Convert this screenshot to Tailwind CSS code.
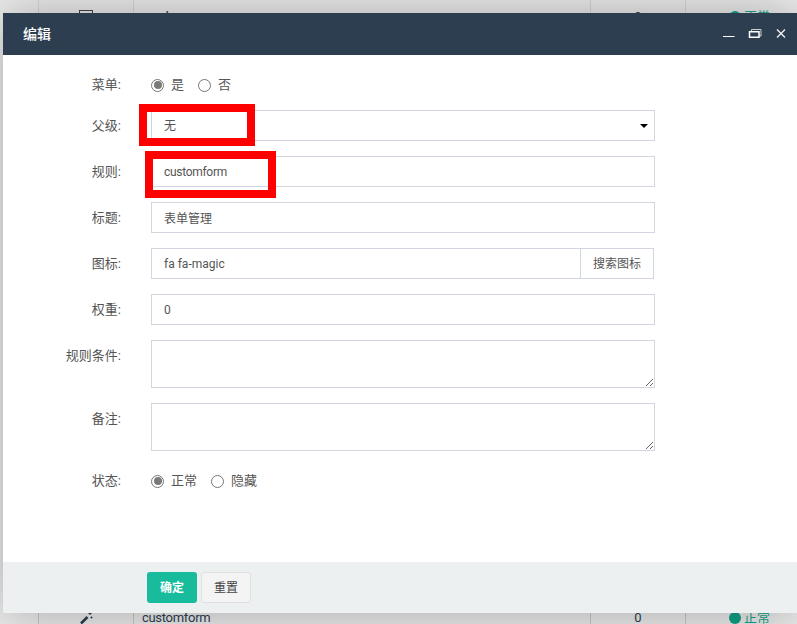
<!DOCTYPE html>
<html lang="zh">
<head>
<meta charset="utf-8">
<script src="https://cdn.jsdelivr.net/npm/@tailwindcss/browser@4"></script>
<title>编辑</title>
</head>
<body class="relative w-[797px] h-[624px] overflow-hidden bg-[#ececec] font-['Roboto','Noto_Sans_CJK_SC',sans-serif] text-[13px] text-[#555]">

<div class="flex h-full flex-col justify-between">
  <div class="grid h-[34px] grid-cols-[38px_95px_457px_95px_112px]">
    <div></div>
    <div class="flex items-center justify-center border-l border-[#d8d8d8]"><span class="h-[14px] w-[14px] border border-[#444]"></span></div>
    <div class="flex items-center border-l border-[#d8d8d8] pl-[28px] text-[14px] text-[#2c3e50]">ılı</div>
    <div class="flex items-center justify-center border-l border-[#d8d8d8] text-[13px] text-[#2c3e50]">0</div>
    <div class="flex items-center gap-[3px] border-l border-[#d8d8d8] pl-[43px] text-[13px] text-[#18a689]"><span class="h-[12px] w-[12px] rounded-full bg-[#12a386]"></span>正常</div>
  </div>
  <div class="-mb-[9px] grid h-[30px] grid-cols-[38px_95px_457px_95px_112px]">
    <div></div>
    <div class="flex items-center justify-center border-l border-[#c8c8c8]">
      <svg width="14" height="14" viewBox="0 0 14 14" fill="none"><path d="M2 12.500 L8.500 6" stroke="#2c3e50" stroke-width="2.600"/><path d="M11 1v3M9.500 2.500h3M12.500 5.500v2M11.500 6.500h2" stroke="#2c3e50" stroke-width="1"/></svg>
    </div>
    <div class="flex items-center border-l border-[#c8c8c8] pl-[8px] text-[13px] tracking-[-0.3px] text-[#2c3e50]">customform</div>
    <div class="flex items-center justify-center border-l border-[#c8c8c8] text-[13px] text-[#2c3e50]">0</div>
    <div class="flex items-center gap-[3px] border-l border-[#c8c8c8] pl-[43px] text-[13px] text-[#18a689]"><span class="h-[12px] w-[12px] rounded-full bg-[#12a386]"></span>正常</div>
  </div>
</div>

<div class="absolute left-[3px] top-[13px] flex h-[600px] w-[794px] flex-col bg-white shadow-[1px_1px_50px_rgba(0,0,0,0.3)]">
  <div class="flex h-[42px] shrink-0 items-center justify-between bg-[#2c3e50] pl-[20px] pr-[11px] text-white">
    <span class="text-[14px] font-medium">编辑</span>
    <div class="flex items-center">
      <svg class="mr-[13px]" width="13" height="14" viewBox="0 0 13 14"><path d="M1 9.500h11.500" stroke="#fff" stroke-width="1"/></svg>
      <svg class="mr-[14px]" width="14" height="14" viewBox="0 0 14 14" fill="none"><path d="M3.500 4V2.500h9.500v6.500h-2" stroke="#ccc" stroke-width="1"/><rect x="1.500" y="4.750" width="9.500" height="5.500" stroke="#fff" stroke-width="1.500"/></svg>
      <svg width="10" height="10" viewBox="0 0 10 10" fill="none"><path d="M1 .500l8 8M9 .500l-8 8" stroke="#eee" stroke-width="1.400"/></svg>
    </div>
  </div>

  <form class="flex min-h-0 flex-1 flex-col pt-[15px]">
    <div class="mb-[10px] flex h-[30px] items-center">
      <label class="w-[118px] text-right">菜单:</label>
      <div class="ml-[30px] flex items-center">
        <span class="flex h-[13px] w-[13px] items-center justify-center rounded-full border border-[#767676]"><span class="h-[8px] w-[8px] shrink-0 rounded-full bg-[#7a7a7a]"></span></span>
        <span class="ml-[7px]">是</span>
        <span class="ml-[14px] h-[13px] w-[13px] rounded-full border border-[#767676]"></span>
        <span class="ml-[7px]">否</span>
      </div>
    </div>

    <div class="mb-[15px] flex h-[31px] items-center">
      <label class="w-[118px] text-right">父级:</label>
      <div class="ml-[30px] flex h-full w-[504px] items-center justify-between border border-[#d2d6de] pl-[12px] pr-[6px]">
        <span class="text-[12px]">无</span>
        <span class="h-0 w-0 border-x-[4px] border-t-[4px] border-x-transparent border-t-black"></span>
      </div>
    </div>

    <div class="mb-[15px] flex h-[31px] items-center">
      <label class="w-[118px] text-right">规则:</label>
      <input value="customform" class="ml-[30px] h-full w-[504px] border border-[#d2d6de] px-[12px] text-[12px] tracking-[-0.3px] text-[#555] outline-none">
    </div>

    <div class="mb-[15px] flex h-[31px] items-center">
      <label class="w-[118px] text-right">标题:</label>
      <input value="表单管理" class="ml-[30px] h-full w-[504px] border border-[#d2d6de] px-[12px] text-[12px] text-[#555] outline-none">
    </div>

    <div class="mb-[15px] flex h-[31px] items-center">
      <label class="w-[118px] text-right">图标:</label>
      <div class="ml-[30px] flex h-full w-[503px]">
        <input value="fa fa-magic" class="h-full min-w-0 flex-1 border border-r-0 border-[#d2d6de] px-[12px] text-[12px] text-[#555] outline-none">
        <button type="button" class="h-full w-[74px] border border-[#d2d6de] bg-white text-[12px] text-[#555]">搜索图标</button>
      </div>
    </div>

    <div class="mb-[15px] flex h-[31px] items-center">
      <label class="w-[118px] text-right">权重:</label>
      <input value="0" class="ml-[30px] h-full w-[504px] border border-[#d2d6de] px-[12px] text-[12px] text-[#555] outline-none">
    </div>

    <div class="mb-[15px] flex h-[48px] items-start">
      <label class="w-[118px] pt-[6px] text-right">规则条件:</label>
      <textarea class="ml-[30px] h-full w-[504px] border border-[#d2d6de] px-[12px] outline-none"></textarea>
    </div>

    <div class="mb-[15px] flex h-[48px] items-start">
      <label class="w-[118px] pt-[6px] text-right">备注:</label>
      <textarea class="ml-[30px] h-full w-[504px] border border-[#d2d6de] px-[12px] outline-none"></textarea>
    </div>

    <div class="flex h-[30px] items-center">
      <label class="w-[118px] text-right">状态:</label>
      <div class="ml-[30px] flex items-center">
        <span class="flex h-[13px] w-[13px] items-center justify-center rounded-full border border-[#767676]"><span class="h-[8px] w-[8px] shrink-0 rounded-full bg-[#7a7a7a]"></span></span>
        <span class="ml-[7px]">正常</span>
        <span class="ml-[14px] h-[13px] w-[13px] rounded-full border border-[#767676]"></span>
        <span class="ml-[7px]">隐藏</span>
      </div>
    </div>
  </form>

  <div class="flex h-[51px] shrink-0 items-center gap-[4px] bg-[#ecf0f1] pl-[144px]">
    <button type="button" class="h-[31px] w-[50px] rounded-[3px] bg-[#18bc9c] text-[12px] font-bold text-white">确定</button>
    <button type="button" class="h-[31px] w-[50px] rounded-[3px] border border-[#e0e0e0] bg-[#f4f4f4] text-[12px] text-[#444]">重置</button>
  </div>
</div>

<div class="absolute left-[139px] top-[104px] h-[42px] w-[116px] border-[8px] border-[#ff0000]"></div>
<div class="absolute left-[145px] top-[151px] h-[47px] w-[131px] border-[8px] border-[#ff0000]"></div>

</body>
</html>
